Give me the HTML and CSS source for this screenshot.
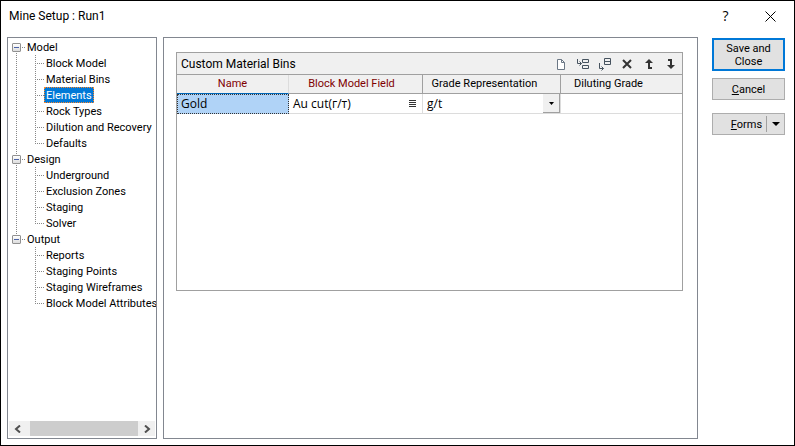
FILE: index.html
```html
<!DOCTYPE html>
<html lang="en">
<head>
<meta charset="utf-8">
<title>Mine Setup : Run1</title>
<link rel="stylesheet" href="styles.css">
</head>
<body>
<div class="dialog">
  <header class="titlebar">
    <h1 class="title">Mine Setup : Run1</h1>
    <button class="title-btn" type="button" aria-label="Help">?</button>
    <button class="title-btn" type="button" aria-label="Close"><svg width="11" height="11" viewBox="0 0 11 11"><path d="M.5 .5l10 10M10.500 .5l-10 10" stroke="#000" fill="none"/></svg></button>
  </header>
  <div class="content">
    <nav class="tree-panel" aria-label="Setup pages">
      <ul class="tree">
        <li class="group">
          <div class="group-head"><button class="expander" type="button" aria-label="Collapse Model"></button><span class="stub"></span><button class="node" type="button">Model</button></div>
          <ul class="children">
            <li class="leaf"><button class="node" type="button">Block Model</button></li>
            <li class="leaf"><button class="node" type="button">Material Bins</button></li>
            <li class="leaf"><button class="node selected" type="button">Elements</button></li>
            <li class="leaf"><button class="node" type="button">Rock Types</button></li>
            <li class="leaf"><button class="node" type="button">Dilution and Recovery</button></li>
            <li class="leaf"><button class="node" type="button">Defaults</button></li>
          </ul>
        </li>
        <li class="group">
          <div class="group-head"><button class="expander" type="button" aria-label="Collapse Design"></button><span class="stub"></span><button class="node" type="button">Design</button></div>
          <ul class="children">
            <li class="leaf"><button class="node" type="button">Underground</button></li>
            <li class="leaf"><button class="node" type="button">Exclusion Zones</button></li>
            <li class="leaf"><button class="node" type="button">Staging</button></li>
            <li class="leaf"><button class="node" type="button">Solver</button></li>
          </ul>
        </li>
        <li class="group">
          <div class="group-head"><button class="expander" type="button" aria-label="Collapse Output"></button><span class="stub"></span><button class="node" type="button">Output</button></div>
          <ul class="children">
            <li class="leaf"><button class="node" type="button">Reports</button></li>
            <li class="leaf"><button class="node" type="button">Staging Points</button></li>
            <li class="leaf"><button class="node" type="button">Staging Wireframes</button></li>
            <li class="leaf"><button class="node" type="button">Block Model Attributes</button></li>
          </ul>
        </li>
      </ul>
      <div class="scrollbar">
        <button class="scroll-btn" type="button" aria-label="Scroll left"><svg width="8" height="8" viewBox="0 0 8 8"><path d="M6 .5L2 4l4 3.500" fill="none" stroke="#505050" stroke-width="2"/></svg></button>
        <div class="thumb"></div>
        <button class="scroll-btn" type="button" aria-label="Scroll right"><svg width="8" height="8" viewBox="0 0 8 8"><path d="M2 .5L6 4 2 7.500" fill="none" stroke="#505050" stroke-width="2"/></svg></button>
      </div>
    </nav>
    <main class="page">
      <section class="bins">
        <div class="toolbar">
          <h2 class="bins-title">Custom Material Bins</h2>
          <button class="tool" type="button" aria-label="New"><svg width="16" height="16" viewBox="0 0 16 16"><path d="M4.500 3.500h4l3 3v7h-7z" fill="#fff" stroke="#6b7785"/><path d="M8.500 3.500v3h3" fill="none" stroke="#6b7785"/></svg></button>
          <button class="tool" type="button" aria-label="Insert row above"><svg width="16" height="16" viewBox="0 0 16 16"><path d="M7.500 3.500h6v3h-6zM7.500 9.500h6v3h-6zM2.500 3v4.500h4M4.500 5.500l2 2-2 2" fill="none" stroke="#46535f"/></svg></button>
          <button class="tool" type="button" aria-label="Insert row below"><svg width="16" height="16" viewBox="0 0 16 16"><path d="M7.500 2.500h6v6h-6zM7.500 5.500h6M2.500 7v5.500h4M4.500 10.500l2 2-2 2" fill="none" stroke="#46535f"/></svg></button>
          <button class="tool" type="button" aria-label="Delete row"><svg width="16" height="16" viewBox="0 0 16 16"><path d="M4 4l8 8M12 4l-8 8" fill="none" stroke="#333" stroke-width="2"/></svg></button>
          <button class="tool" type="button" aria-label="Move up"><svg width="16" height="16" viewBox="0 0 16 16"><path d="M8 5v7h3" fill="none" stroke="#333" stroke-width="2"/><path d="M4 7l4-4 4 4z" fill="#333"/></svg></button>
          <button class="tool" type="button" aria-label="Move down"><svg width="16" height="16" viewBox="0 0 16 16"><path d="M5 4h3v7" fill="none" stroke="#333" stroke-width="2"/><path d="M4 9l4 4 4-4z" fill="#333"/></svg></button>
        </div>
        <table class="grid">
          <colgroup><col class="c-name"><col class="c-field"><col class="c-grade"><col class="c-dilute"></colgroup>
          <thead>
            <tr><th class="required current" scope="col">Name</th><th class="required h-field" scope="col">Block Model Field</th><th class="h-grade" scope="col">Grade Representation</th><th class="h-dilute" scope="col">Diluting Grade</th></tr>
          </thead>
          <tbody>
            <tr>
              <td class="active">Gold</td>
              <td><div class="cell"><span>Au cut(г/т)</span><button class="picker" type="button" aria-label="Choose field"><svg width="7" height="8" viewBox="0 0 7 8"><path d="M0 .5h7M0 2.500h7M0 4.500h7M0 6.500h7" stroke="#333"/></svg></button></div></td>
              <td><div class="combo"><select aria-label="Grade representation"><option>g/t</option></select><span class="drop"><svg width="5" height="3" viewBox="0 0 5 3"><path d="M0 0h5L2.500 3z"/></svg></span></div></td>
              <td></td>
            </tr>
          </tbody>
        </table>
      </section>
    </main>
    <aside class="actions">
      <button class="btn primary" type="button">Save and Close</button>
      <button class="btn" type="button"><u>C</u>ancel</button>
      <button class="btn split" type="button" aria-haspopup="menu"><span class="split-label"><u>F</u>orms</span><span class="split-arrow"><svg width="8" height="4" viewBox="0 0 8 4"><path d="M0 0h8L4 4z"/></svg></span></button>
    </aside>
  </div>
</div>
</body>
</html>
```
FILE: styles.css
```css
* { box-sizing: border-box; }
body { margin: 0; font: 11px/16px Roboto, "Noto Sans", sans-serif; color: #000; background: #fff; }
button, select { font: inherit; color: inherit; margin: 0; padding: 0; border: 0; background: none; }
svg { display: block; }
ul { list-style: none; margin: 0; padding: 0; }

.dialog { display: flex; flex-direction: column; min-height: 100vh; border: 1px solid #000; background: #fff; }
.titlebar { display: flex; align-items: center; height: 30px; padding: 0 1px 0 8px; }
.title { flex: 1; margin: 0; font: 12px/16px Roboto, sans-serif; }
.title-btn { display: grid; place-items: center; width: 45px; height: 28px; font: 14px/20px "Open Sans", sans-serif; }

.content { flex: 1; display: flex; align-items: stretch; padding: 6px 9px 6px 6px; }

.tree-panel { display: flex; flex-direction: column; width: 150px; margin-right: 6px; padding: 1px; border: 1px solid #828790; overflow: hidden; }
.tree { flex: 1; }
.group { background: repeating-linear-gradient(#888 0 1px, transparent 1px 2px) 7px 0 / 1px 100% no-repeat; }
.group:first-child { background-position-y: 8px; }
.group:last-child { background-size: 1px 8px; }
.group-head { display: flex; align-items: center; height: 16px; padding-left: 3px; }
.expander { width: 9px; height: 9px; border: 1px solid #919191; border-radius: 1px; background: linear-gradient(#4b63a7, #4b63a7) center / 5px 1px no-repeat, linear-gradient(#fff, #ddd); }
.stub { width: 4px; height: 1px; margin-left: 1px; background: repeating-linear-gradient(90deg, #888 0 1px, transparent 1px 2px); }
.group-head .node { padding-left: 0; }
.node { height: 16px; padding: 0 1px; border: 1px solid transparent; line-height: 15px; white-space: nowrap; }
.leaf { display: flex; height: 16px; padding-left: 35px;
  background:
    repeating-linear-gradient(#888 0 1px, transparent 1px 2px) 26px 0 / 1px 100% no-repeat,
    repeating-linear-gradient(90deg, #888 0 1px, transparent 1px 2px) 26px 8px / 9px 1px no-repeat; }
.leaf:last-child { background-size: 1px 8px, 9px 1px; }
.selected { color: #fff; background: #0078d7; border: 1px dotted #ff8728; }

.scrollbar { display: flex; height: 15px; margin-bottom: 1px; background: #f0f0f0; }
.scroll-btn { display: grid; place-items: center; width: 17px; }
.thumb { flex: 1; margin: 0 0 0 4px; background: #cdcdcd; }

.page { flex: 1; min-width: 0; padding: 14px 14px 14px 12px; border: 1px solid #828790; }
.bins { height: 239px; border: 1px solid #a0a0a0; }
.toolbar { display: flex; align-items: center; gap: 6px; height: 22px; padding: 0 3px 0 4px; background: #f0f0f0; border-bottom: 1px solid #a0a0a0; }
.bins-title { flex: 1; margin: 0; font: 12px/16px Roboto, sans-serif; }
.tool { width: 16px; height: 16px; }

.grid { width: 100%; table-layout: fixed; border-collapse: separate; border-spacing: 0; }
.c-name { width: 112px; }
.c-field { width: 134px; }
.c-grade { width: 138px; }
.grid th { height: 19px; padding: 0 4px; font-weight: normal; background: #f0f0f0; border-right: 1px solid #a0a0a0; border-bottom: 1px solid #a0a0a0; }
.grid th:last-child, .grid td:last-child { border-right: 0; }
.grid .h-field { padding-right: 12px; }
.grid .h-grade { padding-right: 18px; }
.grid .h-dilute { padding-right: 30px; }
.grid .required { color: #800000; }
.grid .current { border-right-color: #dcdcdc; border-bottom-color: #0067b8; }
.grid td { height: 20px; padding: 0; font: 12px/16px "Open Sans", sans-serif; border-right: 1px solid #dcdcdc; border-bottom: 1px solid #dcdcdc; }
.grid .active { padding: 0 3px; background: #b0d3f7; border: 1px dotted #333; }
.cell { display: flex; align-items: center; justify-content: space-between; padding: 0 6px 0 4px; }
.picker { display: block; }
.combo { position: relative; display: flex; height: 19px; }
.combo select { flex: 1; appearance: none; padding: 0 20px 0 4px; border-radius: 0; }
.drop { position: absolute; top: 0; right: 0; display: grid; place-items: center; width: 17px; height: 19px; background: #f0f0f0; border-right: 1px solid #a0a0a0; border-bottom: 1px solid #a0a0a0; pointer-events: none; }

.actions { display: flex; flex-direction: column; width: 73px; margin-left: 14px; padding-top: 1px; }
.btn { height: 22px; border: 1px solid #adadad; background: #e1e1e1; line-height: 13px; }
.primary { height: 33px; margin-bottom: 7px; padding: 0 8px; border: 2px solid #0078d7; }
.split { display: flex; align-items: center; margin-top: 13px; }
.split-label { flex: 1; padding-left: 14px; }
.split-arrow { display: grid; place-items: center; width: 18px; height: 16px; border-left: 1px solid #a0a0a0; }
```
